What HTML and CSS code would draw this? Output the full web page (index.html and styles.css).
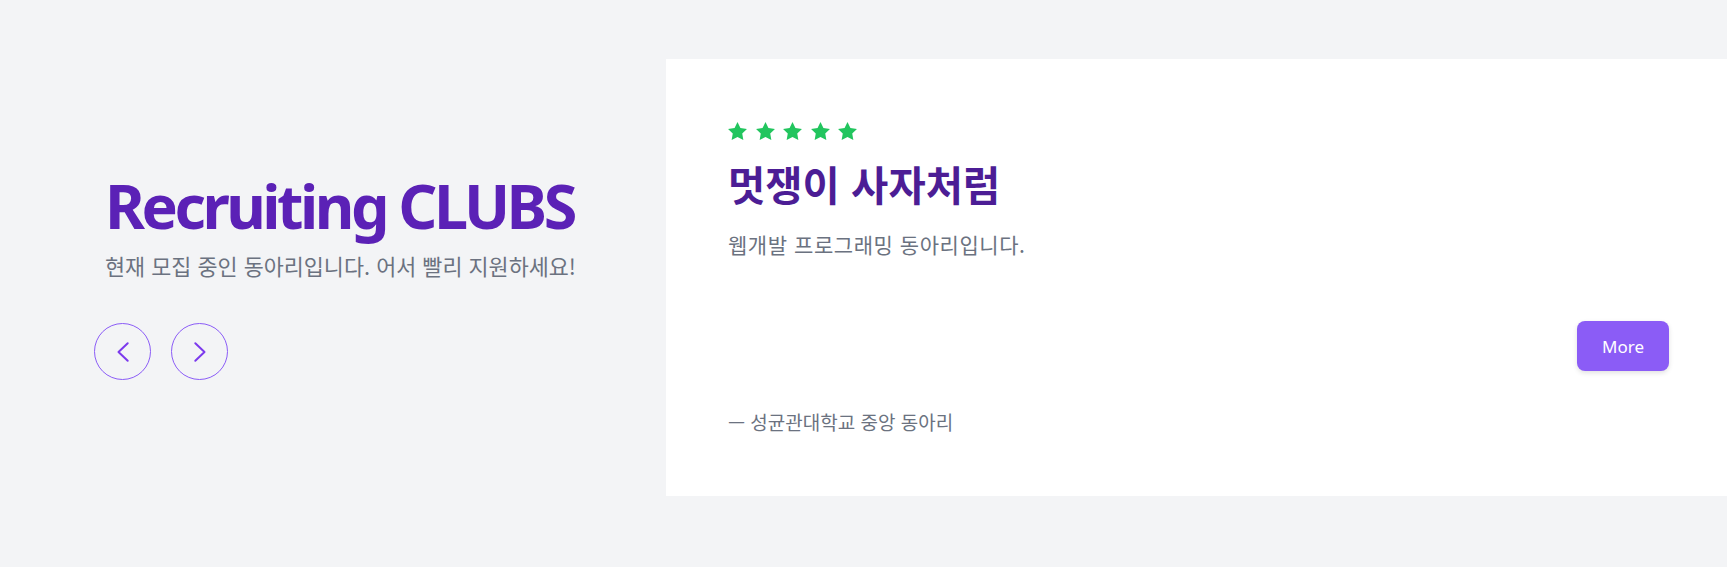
FILE: index.html
```html
<!DOCTYPE html>
<html lang="ko">
<head>
<meta charset="utf-8">
<title>Recruiting CLUBS</title>
<link rel="stylesheet" href="styles.css">
</head>
<body>
<section class="recruit">
  <div class="intro">
    <div class="intro-text">
      <h1 class="intro-title">Recruiting CLUBS</h1>
      <p class="intro-sub">현재 모집 중인 동아리입니다. 어서 빨리 지원하세요!</p>
    </div>
    <div class="nav">
      <button class="nav-btn" aria-label="이전">
        <svg width="24" height="24" viewBox="0 0 24 24"><path d="M16.7 3.2 L7.5 12 L16.7 20.8" fill="none" stroke="currentColor" stroke-width="2" stroke-linecap="round" stroke-linejoin="round"/></svg>
      </button>
      <button class="nav-btn" aria-label="다음">
        <svg width="24" height="24" viewBox="0 0 24 24"><path d="M7.3 3.2 L16.5 12 L7.3 20.8" fill="none" stroke="currentColor" stroke-width="2" stroke-linecap="round" stroke-linejoin="round"/></svg>
      </button>
    </div>
  </div>
  <article class="card">
    <div class="stars">
      <svg class="star" viewBox="2 2 20 19.02"><polygon points="12,2 15.09,8.26 22,9.27 17,14.14 18.18,21.02 12,17.77 5.82,21.02 7,14.14 2,9.27 8.91,8.26"/></svg>
      <svg class="star" viewBox="2 2 20 19.02"><polygon points="12,2 15.09,8.26 22,9.27 17,14.14 18.18,21.02 12,17.77 5.82,21.02 7,14.14 2,9.27 8.91,8.26"/></svg>
      <svg class="star" viewBox="2 2 20 19.02"><polygon points="12,2 15.09,8.26 22,9.27 17,14.14 18.18,21.02 12,17.77 5.82,21.02 7,14.14 2,9.27 8.91,8.26"/></svg>
      <svg class="star" viewBox="2 2 20 19.02"><polygon points="12,2 15.09,8.26 22,9.27 17,14.14 18.18,21.02 12,17.77 5.82,21.02 7,14.14 2,9.27 8.91,8.26"/></svg>
      <svg class="star" viewBox="2 2 20 19.02"><polygon points="12,2 15.09,8.26 22,9.27 17,14.14 18.18,21.02 12,17.77 5.82,21.02 7,14.14 2,9.27 8.91,8.26"/></svg>
    </div>
    <h2 class="card-title">멋쟁이 사자처럼</h2>
    <p class="card-desc">웹개발 프로그래밍 동아리입니다.</p>
    <div class="card-actions">
      <button class="more-btn">More</button>
    </div>
    <p class="card-foot">— 성균관대학교 중앙 동아리</p>
  </article>
</section>
</body>
</html>
```

FILE: styles.css
```css
* {
  box-sizing: border-box;
}

html, body {
  margin: 0;
  padding: 0;
}

body {
  background: #f3f4f6;
  font-family: "Noto Sans", "Noto Sans CJK KR", sans-serif;
  width: 1727px;
  height: 567px;
  overflow: hidden;
}

.recruit {
  display: flex;
  align-items: center;
  padding: 59px 0 71px;
  height: 567px;
}

.intro {
  width: 666px;
  flex: none;
  padding-left: 94px;
  padding-bottom: 6px;
  display: flex;
  flex-direction: column;
}

.intro-text {
  padding-left: 11px;
}

.intro-title {
  margin: 0;
  font-family: "Noto Sans", sans-serif;
  font-weight: 700;
  font-size: 61px;
  line-height: 74px;
  letter-spacing: -3.5px;
  color: #5b21b6;
  white-space: nowrap;
}

.intro-sub {
  margin: 8px 0 0;
  font-family: "Noto Sans CJK KR", sans-serif;
  font-size: 21.8px;
  line-height: 30px;
  color: #6b7280;
  white-space: nowrap;
}

.nav {
  display: flex;
  gap: 20px;
  margin-top: 42px;
}

.nav-btn {
  width: 57px;
  height: 57px;
  border-radius: 50%;
  border: 1px solid #8b5cf6;
  background: transparent;
  color: #7c3aed;
  padding: 0;
  display: flex;
  align-items: center;
  justify-content: center;
  cursor: pointer;
}

.card {
  flex: 1;
  align-self: stretch;
  background: #ffffff;
  padding: 63px 58px 0 62px;
  display: flex;
  flex-direction: column;
}

.stars {
  display: flex;
  gap: 8.5px;
  height: 18px;
}

.star {
  width: 19px;
  height: 18px;
  fill: #22c55e;
}

.card-title {
  margin: 19px 0 0;
  font-family: "Noto Sans CJK KR", sans-serif;
  font-weight: 700;
  font-size: 40.5px;
  line-height: 50px;
  color: #4c1d95;
}

.card-desc {
  margin: 21px 0 0;
  font-family: "Noto Sans CJK KR", sans-serif;
  font-size: 21px;
  line-height: 28px;
  letter-spacing: 0.55px;
  color: #6b7280;
}

.card-actions {
  display: flex;
  justify-content: flex-end;
  margin-top: 63px;
}

.more-btn {
  width: 92px;
  height: 50px;
  border: none;
  border-radius: 8px;
  background: #8b5cf6;
  color: #ffffff;
  font-family: "Noto Sans", sans-serif;
  font-size: 17px;
  box-shadow: 0 2px 5px rgba(0, 0, 0, 0.12);
  cursor: pointer;
}

.card-foot {
  margin: 37px 0 0;
  font-family: "Noto Sans CJK KR", sans-serif;
  font-size: 19px;
  line-height: 28px;
  color: #6b7280;
}
```
